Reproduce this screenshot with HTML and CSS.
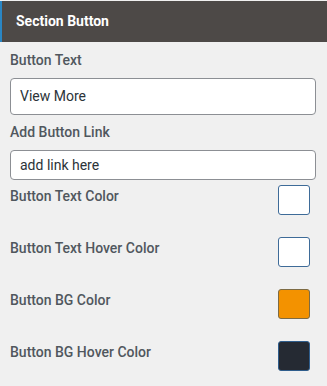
FILE: index.html
```html
<!DOCTYPE html>
<html>
<head>
<meta charset="utf-8">
<link rel="stylesheet" href="styles.css">
</head>
<body>
<div class="panel">
  <div class="header">Section Button</div>
  <div class="body">
    <div class="field">
      <div class="label">Button Text</div>
      <div class="input tall">View More</div>
    </div>
    <div class="field">
      <div class="label">Add Button Link</div>
      <div class="input short">add link here</div>
    </div>
    <div class="color-row">
      <div class="label">Button Text Color</div>
      <div class="swatch white"></div>
    </div>
    <div class="color-row">
      <div class="label">Button Text Hover Color</div>
      <div class="swatch white"></div>
    </div>
    <div class="color-row">
      <div class="label">Button BG Color</div>
      <div class="swatch orange"></div>
    </div>
    <div class="color-row">
      <div class="label">Button BG Hover Color</div>
      <div class="swatch dark"></div>
    </div>
  </div>
</div>
</body>
</html>
```
FILE: styles.css
```css
html, body {
  margin: 0;
  padding: 0;
  background: #f0f0f0;
}
body {
  font-family: Roboto, "Noto Sans", sans-serif;
  width: 327px;
  height: 386px;
  overflow: hidden;
}
.panel {
  padding-top: 1px;
}
.header {
  height: 41px;
  box-sizing: border-box;
  background: #4d4947;
  border-left: 2px solid #2a86c4;
  color: #fff;
  font-size: 14px;
  font-weight: 700;
  line-height: 41px;
  padding-left: 14px;
}
.body {
  padding: 0 17px 0 10px;
}
.label {
  color: #50575e;
  font-size: 14px;
  font-weight: 500;
  line-height: 18px;
}
.field .label {
  padding-top: 9px;
}
.field .label + .input {
  margin-top: 9px;
}
.input {
  box-sizing: border-box;
  width: 306px;
  background: #fff;
  border: 1px solid #8c8f94;
  border-radius: 4px;
  color: #2c3338;
  font-size: 14px;
  padding: 0 9px;
}
.input.tall {
  height: 37px;
  line-height: 35px;
}
.input.short {
  height: 30px;
  line-height: 28px;
}
.field:nth-child(2) .label {
  padding-top: 8px;
}
.color-row {
  display: flex;
  justify-content: space-between;
  align-items: flex-start;
  height: 52px;
}
.color-row:nth-child(3) {
  margin-top: 5px;
}
.color-row .label {
  padding-top: 2px;
}
.swatch {
  box-sizing: border-box;
  width: 32px;
  height: 30px;
  border-radius: 3px;
  border: 1px solid #3e6b98;
}
.swatch.white { background: #fff; }
.swatch.orange { background: #f39200; border-color: #7d6b44; }
.swatch.dark { background: #252a33; border-color: #2f5d8c; }
```
